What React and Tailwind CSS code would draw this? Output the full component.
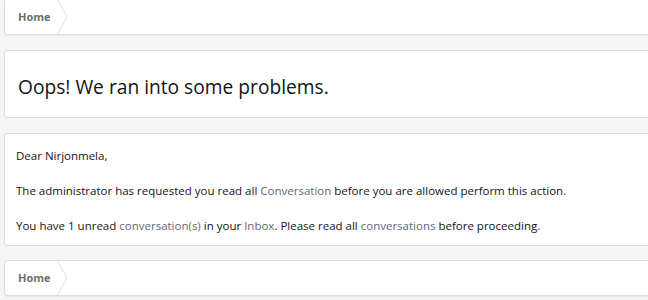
function Crumbs() {
    return (
        <div className="h-[36px] bg-white border border-[#dcdcdc] rounded-[3px] shadow-[0_1px_2px_rgba(0,0,0,0.06)] flex items-stretch">
            <div className="relative flex items-center pl-[13px] pr-[6px] text-[11px] font-bold text-[#6e6e6e]">
                Home
                <svg className="absolute right-[-11px] top-0 h-full w-[11px]" viewBox="0 0 11 36" preserveAspectRatio="none">
                    <polyline points="0.5,0 10,18 0.5,36" fill="none" stroke="#dedede" strokeWidth="1" />
                </svg>
            </div>
        </div>
    );
}

export default function App() {
    const link = "text-[#5d6a79]";
    return (
        <div className="w-screen h-screen overflow-hidden bg-[#f5f5f5]" style={{ fontFamily: '"Open Sans", "Noto Sans", sans-serif' }}>
            <div className="w-[680px] pl-[4px] flex flex-col text-[#141414]">
                <div className="-mt-[1px]">
                    <Crumbs />
                </div>
                <div className="mt-[15px] h-[68px] bg-white border border-[#dcdcdc] rounded-[3px] flex items-center pl-[13px] pt-[6px]">
                    <h1 className="text-[19.2px] leading-[24px]">Oops! We ran into some problems.</h1>
                </div>
                <div className="mt-[15px] bg-white border border-[#dcdcdc] rounded-[3px] pl-[11px] pt-[13px] pb-[11px] text-[11.5px] leading-[17px]">
                    <p>Dear Nirjonmela,</p>
                    <p className="mt-[18px]">
                        The administrator has requested you read all <span className={link}>Conversation</span> before you are allowed perform this action.
                    </p>
                    <p className="mt-[18px]">
                        You have 1 unread <span className={link}>conversation(s)</span> in your <span className={link}>Inbox</span>. Please read all <span className={link}>conversations</span> before proceeding.
                    </p>
                </div>
                <div className="mt-[14px]">
                    <Crumbs />
                </div>
            </div>
        </div>
    );
}
